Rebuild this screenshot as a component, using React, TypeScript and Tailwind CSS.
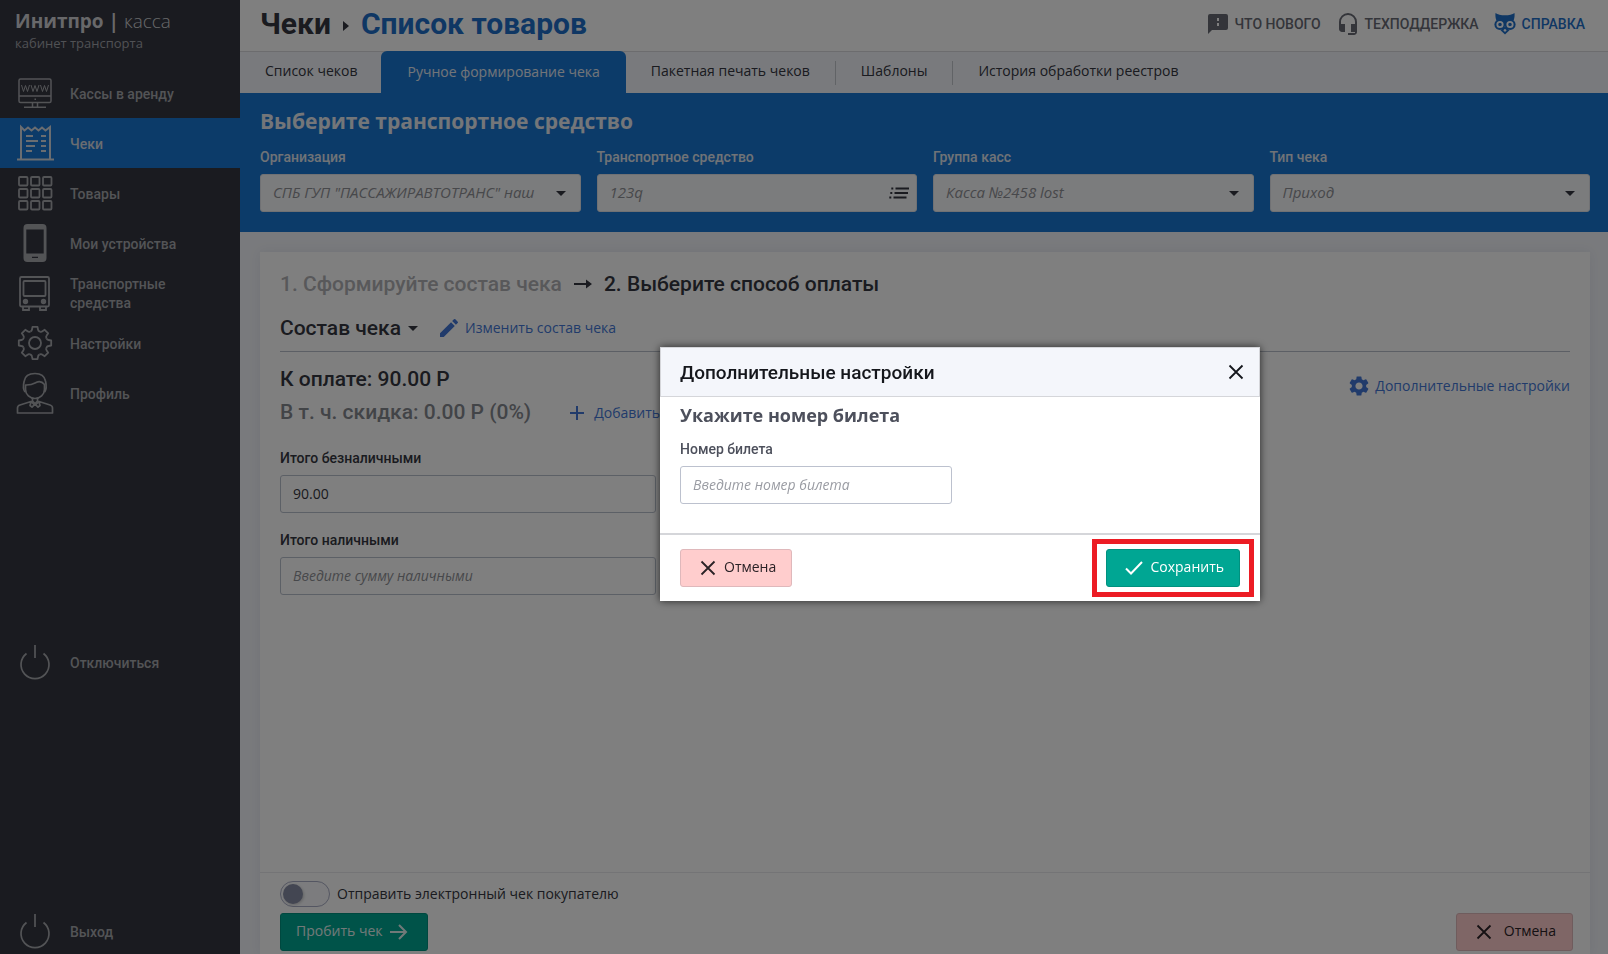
import { useState } from 'react';
import type { ReactNode } from 'react';
import { MdAdd, MdArrowDropDown, MdEdit, MdHeadsetMic, MdSettings } from 'react-icons/md';

const NAV_ITEMS = [
  { label: 'Кассы в аренду', icon: <MonitorIcon /> },
  { label: 'Чеки', icon: <ReceiptIcon />, active: true },
  { label: 'Товары', icon: <GridIcon /> },
  { label: 'Мои устройства', icon: <PhoneIcon /> },
  { label: 'Транспортные средства', icon: <BusIcon /> },
  { label: 'Настройки', icon: <GearIcon /> },
  { label: 'Профиль', icon: <ProfileIcon /> },
];

const FILTERS = [
  { id: 'org', label: 'Организация', value: 'СПБ ГУП "ПАССАЖИРАВТОТРАНС" наш' },
  { id: 'vehicle', label: 'Транспортное средство', value: '123q', list: true },
  { id: 'group', label: 'Группа касс', value: 'Касса №2458 lost' },
  { id: 'type', label: 'Тип чека', value: 'Приход' },
];

function MonitorIcon() {
  return (
    <svg width="36" height="36" viewBox="0 0 36 36" fill="none" stroke="currentColor" strokeWidth="1.5">
      <rect x="2" y="4" width="32" height="23.500" rx="1.500" />
      <path d="M2 21h32M15.500 27.500v4M20.500 27.500v4M7 32.300h22M17.500 24.300h1.500" />
      <path strokeWidth="1" d="M4.500 10l2 6.500 2-6 2 6 2-6.500M14 10l2 6.500 2-6 2 6 2-6.500M23.500 10l2 6.500 2-6 2 6 2-6.500" />
    </svg>
  );
}

function ReceiptIcon() {
  return (
    <svg width="38" height="38" viewBox="0 0 38 38" fill="none" stroke="currentColor" strokeWidth="2">
      <path d="M5 35.500V3l3.500 3.500L12 3.500l3.500 3 3.500-3 3.500 3 3.500-3 3.500 3L34 3v32.500M1 35.500h37" />
      <path d="M10 12h7M25 12h5M10 17h12M25 17h5M10 22h9M25 22h5M10 27h6M25 27h5" />
    </svg>
  );
}

function GridIcon() {
  return (
    <svg width="36" height="36" viewBox="0 0 36 36" fill="none" stroke="currentColor" strokeWidth="1.800">
      {[2, 14, 26].map((y) =>
        [2, 14, 26].map((x) => <rect key={`${x}-${y}`} x={x} y={y} width="8.500" height="8.500" rx="1" />)
      )}
    </svg>
  );
}

function PhoneIcon() {
  return (
    <svg width="38" height="38" viewBox="0 0 38 38" fill="currentColor">
      <path fillRule="evenodd" d="M11.500 0h15a4 4 0 0 1 4 4v30a4 4 0 0 1-4 4h-15a4 4 0 0 1-4-4V4a4 4 0 0 1 4-4zM10.300 5.500v24h17.400v-24zM16 32.800v1.200h6v-1.200z" />
    </svg>
  );
}

function BusIcon() {
  return (
    <svg width="36" height="36" viewBox="0 0 36 36" fill="none" stroke="currentColor" strokeWidth="1.800">
      <rect x="3" y="2" width="29" height="29.500" rx="1.500" />
      <rect x="6.500" y="6" width="22" height="15" rx="1" />
      <circle cx="8.500" cy="26.500" r="1.800" fill="currentColor" />
      <circle cx="26.500" cy="26.500" r="1.800" fill="currentColor" />
      <path d="M6 31.500V35h6v-3.500M23 31.500V35h6v-3.500" />
    </svg>
  );
}

function GearIcon() {
  const teeth = [0, 45, 90, 135, 180, 225, 270, 315];
  return (
    <svg width="36" height="36" viewBox="-18 -18 36 36" fill="none" stroke="currentColor" strokeWidth="1.800" strokeLinejoin="round">
      {teeth.map((angle) => (
        <path key={angle} transform={`rotate(${angle})`} d="M-4.400 -11.600Q-3.200 -12.200 -3 -13.500L-2.500 -16.200H2.500L3 -13.500Q3.200 -12.200 4.400 -11.600L5.100 -11.300" />
      ))}
      <circle r="6" />
    </svg>
  );
}

function ProfileIcon() {
  return (
    <svg width="38" height="42" viewBox="0 0 38 42" fill="none" stroke="currentColor" strokeWidth="1.700" strokeLinejoin="round">
      <path d="M9 20c-1.500-2-1.800-7-.8-11C9 4 13.500 1.500 19 1.500S28.500 4 29.500 9c.9 4 .6 9-.8 11" />
      <path d="M9.500 13c6 .3 8.500-1.500 11-2.800 3-1.200 5.500-.8 8 2.300v5c0 5-4.500 9-9.500 9S9.500 22.500 9.500 17.500z" />
      <path d="M16.500 25.500v3.500l2.500 2.500 2.500-2.500v-3.500M1.500 41v-5c0-1.500 1-2.500 2.500-3l11-3.500 4 3.500 4-3.500L34 33c1.500.5 2.500 1.500 2.500 3v5zM15 30l-1 3.500 2 1.700 3-3 3 3 2-1.700-1-3.500" />
    </svg>
  );
}

function PowerIcon() {
  return (
    <svg width="36" height="36" viewBox="0 0 36 36" fill="none" stroke="currentColor" strokeWidth="1.700">
      <path d="M9.500 9.500a14 14 0 1 0 17 0M18 1v13" />
    </svg>
  );
}

function NewsIcon() {
  return (
    <svg width="20" height="20" viewBox="0 0 20 20" fill="currentColor">
      <path fillRule="evenodd" d="M2 0h16a2 2 0 0 1 2 2v12a2 2 0 0 1-2 2H4l-4 4V2a2 2 0 0 1 2-2zm7 4v3h2V4zm0 5v3h2V9z" />
    </svg>
  );
}

function OwlIcon() {
  return (
    <svg width="22" height="22" viewBox="0 0 22 22" fill="currentColor">
      <path d="M1.500 0C3.500 1.500 7 2.300 11 2.300S18.500 1.500 20.500 0c.3 2.500 0 5-.8 7.200L11 11 2.300 7.200C1.500 5 1.200 2.500 1.500 0z" />
      <circle cx="5.800" cy="11.500" r="5.400" />
      <circle cx="16.200" cy="11.500" r="5.400" />
      <path d="M6.500 17.300L11 13.500l4.500 3.800L11 21.500z" />
      <g fill="none" stroke="#fff" strokeWidth="1.800">
        <circle cx="6" cy="11.500" r="2.700" />
        <circle cx="16" cy="11.500" r="2.700" />
      </g>
      <path fill="#fff" d="M9.300 17.300L11 15.800l1.700 1.500L11 19z" />
    </svg>
  );
}

function ListIcon() {
  return (
    <svg width="20" height="12" viewBox="0 0 20 12" fill="none" stroke="currentColor" strokeWidth="2">
      <path d="M6.500 1.500H20M5.500 6H19M4.500 10.500H17.500M2.300 1.500h2M1.300 6h2M.3 10.500h2" />
    </svg>
  );
}

function CrossIcon() {
  return (
    <svg width="16" height="16" viewBox="0 0 16 16" fill="none" stroke="currentColor" strokeWidth="1.800">
      <path d="M1.500 1.500l13 13M14.500 1.500l-13 13" />
    </svg>
  );
}

function NavLink({ label, icon, active }: { label: string; icon: ReactNode; active?: boolean }) {
  return (
    <a
      href="#"
      className={`flex h-[50px] shrink-0 items-center text-sm leading-[19px] font-medium ${
        active ? 'bg-[#1976d2] text-[#d5dae2]' : 'text-[#a6a8ad]'
      }`}
    >
      <span className="flex w-[70px] shrink-0 justify-center">{icon}</span>
      <span className="w-[130px] pt-0.5">{label}</span>
    </a>
  );
}

function CancelButton({ wide, onClick }: { wide?: boolean; onClick?: () => void }) {
  return (
    <button
      onClick={onClick}
      className={`flex h-[38px] items-center rounded-[3px] border border-[#dfb8bb] bg-[#ffcdcd] pl-[19px] font-['Open_Sans',sans-serif] text-sm text-[#2b2226] ${
        wide ? 'gap-3 pr-4' : 'gap-2 pr-[15px]'
      }`}
    >
      <CrossIcon />
      <span className="pb-0.5">Отмена</span>
    </button>
  );
}

export default function App() {
  const [open, setOpen] = useState(true);
  const [ticket, setTicket] = useState('');

  return (
    <div className="flex h-screen overflow-hidden bg-[#f3f5fa] font-['Roboto',sans-serif] text-[#343640]">
      {/* Sidebar */}
      <aside className="flex w-[240px] shrink-0 flex-col bg-[#343640]">
        <div className="h-[68px] px-[15px] pt-2 font-['Open_Sans',sans-serif]">
          <div className="text-[19px] leading-[26px] text-[#d0d1d4]">
            <b>Инитпро |</b> <span className="font-light">касса</span>
          </div>
          <div className="text-[13px] leading-[18px] text-[#a0a2a8]">кабинет транспорта</div>
        </div>
        <nav className="flex flex-1 flex-col">
          {NAV_ITEMS.map((item) => (
            <NavLink key={item.label} {...item} />
          ))}
          <div className="mt-[219px]">
            <NavLink label="Отключиться" icon={<PowerIcon />} />
          </div>
          <div className="mt-auto -mb-0.5">
            <NavLink label="Выход" icon={<PowerIcon />} />
          </div>
        </nav>
      </aside>

      <main className="flex min-w-0 flex-1 flex-col">
        <header className="flex h-[52px] shrink-0 items-center justify-between border-b border-[#d8d9dc] bg-white pr-[23px] pb-1 pl-5">
          <h1 className="flex items-center text-[30px] leading-9 font-bold">
            Чеки
            <svg className="mx-3 mt-1" width="6" height="10" viewBox="0 0 6 10" fill="currentColor">
              <path d="M0 0l6 5-6 5z" />
            </svg>
            <span className="text-[#1f6fc8]">Список товаров</span>
          </h1>
          <div className="flex items-center gap-[15px] text-sm font-medium text-[#686a74]">
            <a href="#" className="flex items-center gap-[7px]"><NewsIcon /> ЧТО НОВОГО</a>
            <a href="#" className="flex items-center gap-[5px]"><MdHeadsetMic size={24} /> ТЕХПОДДЕРЖКА</a>
            <a href="#" className="flex items-center gap-[6px] text-[#1f6fc8]"><OwlIcon /> СПРАВКА</a>
          </div>
        </header>

        {/* Tabs */}
        <nav className="flex h-[41px] shrink-0 items-center font-['Open_Sans',sans-serif] text-sm">
          <a href="#" className="pr-6 pb-1 pl-[25px]">Список чеков</a>
          <a href="#" className="-mt-px flex h-[42px] items-center rounded-t-md bg-[#1976d2] px-[26px] text-[#e4eaf2]">Ручное формирование чека</a>
          <a href="#" className="border-r border-[#c3c6cd] px-[25px] pb-1">Пакетная печать чеков</a>
          <a href="#" className="border-r border-[#c3c6cd] px-[25px] pb-1">Шаблоны</a>
          <a href="#" className="px-[25px] pb-1">История обработки реестров</a>
        </nav>

        {/* Filters */}
        <section className="h-[139px] shrink-0 bg-[#1976d2] pt-3 pr-[18px] pl-5">
          <h2 className="font-['Open_Sans',sans-serif] text-[21px] leading-8 font-bold text-[#e9edf2]">Выберите транспортное средство</h2>
          <div className="mt-2 grid grid-cols-4 gap-4">
            {FILTERS.map((filter) => (
              <div key={filter.id}>
                <label htmlFor={filter.id} className="block h-[29px] pt-0.5 text-sm font-medium text-[#e0e6ee]">{filter.label}</label>
                <div className="flex h-[38px] items-center rounded-[3px] border border-[#e0e3e8] bg-[#f7f8fa] pr-[7px] pl-3 font-['Open_Sans',sans-serif] text-sm text-[#8f9196] italic">
                  {filter.list ? (
                    <>
                      <input id={filter.id} defaultValue={filter.value} className="min-w-0 flex-1 text-[15px] outline-none" />
                      <span className="text-[#343640]"><ListIcon /></span>
                    </>
                  ) : (
                    <>
                      <select id={filter.id} className="min-w-0 flex-1 appearance-none text-[15px] outline-none">
                        <option>{filter.value}</option>
                      </select>
                      <MdArrowDropDown size={24} className="text-[#343640]" />
                    </>
                  )}
                </div>
              </div>
            ))}
          </div>
        </section>

        {/* Receipt card */}
        <section className="mt-5 mr-[18px] ml-5 flex flex-1 flex-col bg-white shadow-[0_0_12px_rgba(40,50,90,0.08)]">
          <div className="flex-1 px-5 pt-4">
            <div className="flex items-center gap-3 text-[21px] leading-8 font-medium">
              <span className="text-[#b0b1b5]">1. Сформируйте состав чека</span>
              <svg width="18" height="10" viewBox="0 0 18 10" fill="currentColor">
                <path d="M0 4h12V.5L18 5l-6 4.500V6H0z" />
              </svg>
              <span>2. Выберите способ оплаты</span>
            </div>
            <div className="mt-3 flex h-[40px] items-start border-b border-[#b9bfca] text-[21px] leading-8 font-medium">
              <button className="flex items-center">Состав чека <MdArrowDropDown size={24} /></button>
              <a href="#" className="ml-3 flex items-center gap-1 font-['Open_Sans',sans-serif] text-sm leading-8 font-normal text-[#4377d6]">
                <MdEdit size={24} /> Изменить состав чека
              </a>
            </div>
            <div className="flex items-center justify-between pt-[11px]">
              <div className="text-[21px] leading-[33px] font-medium">
                <div>К оплате: 90.00 Р</div>
                <div className="flex items-center">
                  <span className="text-[#85888f]">В т. ч. скидка: 0.00 Р (0%)</span>
                  <a href="#" className="ml-[34px] flex items-center gap-[5px] font-['Open_Sans',sans-serif] text-sm leading-8 font-normal text-[#4377d6]">
                    <MdAdd size={24} /> Добавить
                  </a>
                </div>
              </div>
              <a href="#" className="mb-5 flex items-center gap-1 font-['Open_Sans',sans-serif] text-sm text-[#4377d6]">
                <MdSettings size={24} /> Дополнительные настройки
              </a>
            </div>
            <div className="mt-[19px] flex w-[376px] flex-col">
              <label htmlFor="cashless" className="h-[27px] text-sm font-medium">Итого безналичными</label>
              <input id="cashless" defaultValue="90.00" className="h-[38px] rounded-[3px] border border-[#b9c0cc] px-3 pb-0.5 font-['Open_Sans',sans-serif] text-sm" />
              <label htmlFor="cash" className="mt-[17px] h-[27px] text-sm font-medium">Итого наличными</label>
              <input id="cash" placeholder="Введите сумму наличными" className="h-[38px] rounded-[3px] border border-[#b9c0cc] px-3 pb-0.5 font-['Open_Sans',sans-serif] text-sm placeholder:text-[#8f9196] placeholder:italic" />
            </div>
          </div>
          <footer className="h-[82px] shrink-0 border-t border-[#e8e9ec] pt-2 pr-[17px] pl-5 font-['Open_Sans',sans-serif] text-sm">
            <label className="flex w-fit items-center gap-[7px]">
              <input type="checkbox" className="peer sr-only" />
              <span className="flex h-[26px] w-[50px] items-center rounded-full border border-[#a9adc4] bg-[#f8f9fc] px-0.5 peer-checked:justify-end">
                <span className="size-5 rounded-full bg-[#868ca4] shadow-[1px_1px_3px_rgba(0,0,0,0.2)]" />
              </span>
              Отправить электронный чек покупателю
            </label>
            <div className="mt-1.5 flex justify-between">
              <button className="flex h-[38px] items-center gap-2 rounded-[3px] border border-[#00917f] bg-[#00a693] pr-[19px] pl-[15px] text-[#e3f3f1]">
                <span className="pb-0.5">Пробить чек</span>
                <svg width="18" height="16" viewBox="0 0 18 16" fill="none" stroke="currentColor" strokeWidth="2">
                  <path d="M0 8h16M9 1l7 7-7 7" />
                </svg>
              </button>
              <CancelButton wide />
            </div>
          </footer>
        </section>
      </main>

      {/* Dialog */}
      {open && (
        <div className="fixed inset-0 bg-black/50 pt-[347px] pl-[660px]">
          <div role="dialog" aria-labelledby="dialog-title" className="w-[600px] bg-white shadow-[0_0_8px_rgba(0,0,0,0.7)]">
            <div className="flex h-[50px] items-center justify-between border border-[#d5d6da] bg-[#f4f6fb] px-[19px] text-[#15171c]">
              <h2 id="dialog-title" className="pt-0.5 text-[19px] font-medium">Дополнительные настройки</h2>
              <button aria-label="Закрыть" onClick={() => setOpen(false)} className="-mr-1"><CrossIcon /></button>
            </div>
            <div className="h-[136px] px-5 pt-1">
              <h3 className="font-['Open_Sans',sans-serif] text-lg leading-7 font-bold text-[#4d505c]">Укажите номер билета</h3>
              <label htmlFor="ticket" className="block h-[37px] pt-2.5 text-sm font-medium text-[#4d505c]">Номер билета</label>
              <input
                id="ticket"
                value={ticket}
                onChange={(e) => setTicket(e.target.value)}
                placeholder="Введите номер билета"
                className="block h-[38px] w-[272px] rounded-[3px] border border-[#bcc1ce] px-3 pb-0.5 font-['Open_Sans',sans-serif] text-sm placeholder:text-[#9a9ca3] placeholder:italic"
              />
            </div>
            <div className="flex h-[68px] items-center justify-between border-t-2 border-[#d5d6da] pr-1.5 pl-5">
              <CancelButton onClick={() => setOpen(false)} />
              <div className="border-[5px] border-[#ec1c24] px-[9px] py-[5px]">
                <button onClick={() => setOpen(false)} className="flex h-[38px] items-center gap-[7px] rounded-[3px] border border-[#00917f] bg-[#00a693] pr-[15px] pl-[18px] font-['Open_Sans',sans-serif] text-sm text-white">
                  <svg width="18" height="14" viewBox="0 0 18 14" fill="none" stroke="currentColor" strokeWidth="2">
                    <path d="M1 7.500l5 5L17 1" />
                  </svg>
                  <span className="pb-0.5">Сохранить</span>
                </button>
              </div>
            </div>
          </div>
        </div>
      )}
    </div>
  );
}
